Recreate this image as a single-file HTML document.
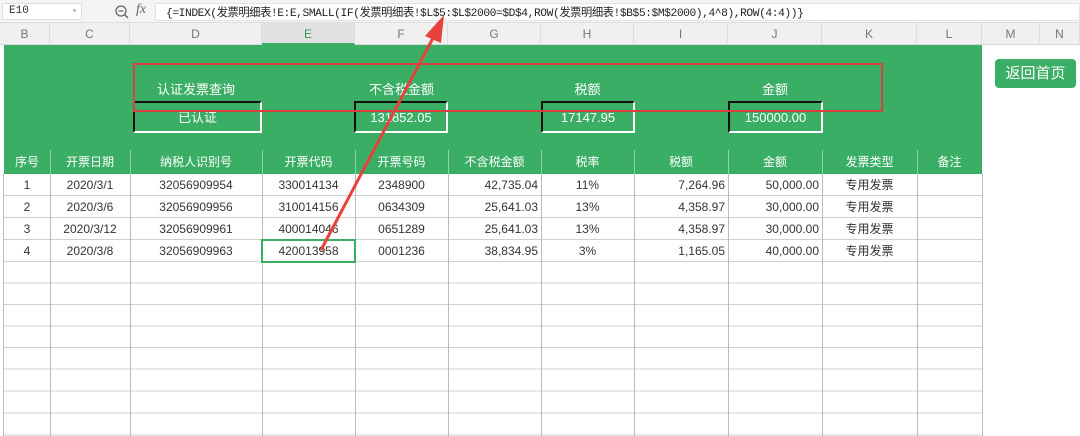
<!DOCTYPE html>
<html><head><meta charset="utf-8"><style>
*{margin:0;padding:0;box-sizing:border-box}
body{width:1080px;height:436px;overflow:hidden;background:#fff;font-family:"Liberation Sans","Noto Sans CJK SC",sans-serif;position:relative}
.a{position:absolute}
.fb{top:0;left:0;width:1080px;height:23px;background:#f4f4f4;border-bottom:1px solid #ddd}
.ch{top:23px;left:0;width:1080px;height:22px;background:#f0f0f0;border-bottom:1px solid #d8d8d8;font-size:12px;color:#777}
.ch div{position:absolute;top:0;height:22px;line-height:22px;text-align:center;border-right:1px solid #ddd}
.green{top:45px;left:4px;width:978px;height:105px;background:#3aae64}
.lbl{color:#fff;font-size:13px;text-align:center;top:79px}
.vb{top:101px;height:32px;border-left:2px solid #111;border-top:2px solid #111;border-right:2px solid #fff;border-bottom:2px solid #fff;color:#fff;font-size:13px;text-align:center;line-height:30px}
.grid{left:0;top:150px}
.c{position:absolute;font-size:12px;color:#333;line-height:22px;white-space:nowrap}
</style></head><body>
<div class="a fb">
 <div class="a" style="left:2px;top:3px;width:80px;height:17px;background:#fff;border:1px solid #e0e0e0;font-size:11px;line-height:15px;padding-left:6px;color:#333;font-family:'Liberation Mono',monospace">E10<span style="position:absolute;right:4px;color:#999;font-size:8px">▾</span></div>
 <svg class="a" style="left:114px;top:4px" width="16" height="16"><circle cx="7" cy="7" r="5" fill="none" stroke="#666" stroke-width="1.3"/><line x1="4.5" y1="7" x2="9.5" y2="7" stroke="#666" stroke-width="1.2"/><line x1="10.5" y1="10.5" x2="14" y2="14" stroke="#666" stroke-width="1.5"/></svg>
 <div class="a" style="left:136px;top:2px;font-family:'Liberation Serif',serif;font-style:italic;font-size:14px;color:#666">fx</div>
 <div class="a" style="left:155px;top:3px;width:925px;height:18px;background:#fff;border:1px solid #e4e4e4"></div>
 <div class="a" style="left:166px;top:4px;font-family:'Liberation Mono','Noto Sans CJK SC',monospace;font-size:11.3px;color:#222;white-space:nowrap;letter-spacing:-0.45px">{=INDEX(发票明细表!E:E,SMALL(IF(发票明细表!$L$5:$L$2000=$D$4,ROW(发票明细表!$B$5:$M$2000),4^8),ROW(4:4))}</div>
</div>
<div class="a ch">
 <div style="left:0;width:50px">B</div><div style="left:50px;width:80px">C</div><div style="left:130px;width:132px">D</div>
 <div style="left:262px;width:93px;background:#e2e2e2;color:#3a9a5c;border-bottom:2px solid #3aae64">E</div><div style="left:355px;width:93px">F</div><div style="left:448px;width:93px">G</div>
 <div style="left:541px;width:93px">H</div><div style="left:634px;width:94px">I</div><div style="left:728px;width:94px">J</div>
 <div style="left:822px;width:95px">K</div><div style="left:917px;width:65px">L</div><div style="left:982px;width:58px">M</div><div style="left:1040px;width:40px">N</div>
</div>
<div class="a green"></div>
<div class="a lbl" style="left:130px;width:132px">认证发票查询</div>
<div class="a lbl" style="left:355px;width:93px">不含税金额</div>
<div class="a lbl" style="left:541px;width:93px">税额</div>
<div class="a lbl" style="left:728px;width:94px">金额</div>
<div class="a vb" style="left:133px;width:129px">已认证</div>
<div class="a vb" style="left:354px;width:94px">131852.05</div>
<div class="a vb" style="left:541px;width:94px">17147.95</div>
<div class="a vb" style="left:728px;width:95px">150000.00</div>
<div class="a" style="left:133px;top:63px;width:750px;height:49px;border:2px solid #d94040"></div>
<div class="a" style="left:995px;top:59px;width:81px;height:29px;background:#3aae64;border-radius:4px;color:#fff;font-size:15px;text-align:center;line-height:29px">返回首页</div>

<svg class="a grid" width="1080" height="286">
 <rect x="4" y="0" width="978" height="24" fill="#3aae64"/>
 <g stroke="#cfcfcf" stroke-width="1">
  <line x1="4" y1="45.5" x2="982" y2="45.5"/><line x1="4" y1="67.5" x2="982" y2="67.5"/><line x1="4" y1="89.5" x2="982" y2="89.5"/><line x1="4" y1="111.5" x2="982" y2="111.5"/>
  <line x1="4" y1="133" x2="982" y2="133"/><line x1="4" y1="154.5" x2="982" y2="154.5"/><line x1="4" y1="176" x2="982" y2="176"/><line x1="4" y1="197.5" x2="982" y2="197.5"/>
  <line x1="4" y1="219" x2="982" y2="219"/><line x1="4" y1="241" x2="982" y2="241"/><line x1="4" y1="263" x2="982" y2="263"/><line x1="4" y1="285" x2="982" y2="285"/>
  <g stroke="#bbb"><line x1="3.5" y1="24" x2="3.5" y2="286"/><line x1="50.5" y1="24" x2="50.5" y2="286"/><line x1="130.5" y1="24" x2="130.5" y2="286"/><line x1="262.5" y1="24" x2="262.5" y2="286"/><line x1="355.5" y1="24" x2="355.5" y2="286"/><line x1="448.5" y1="24" x2="448.5" y2="286"/><line x1="541.5" y1="24" x2="541.5" y2="286"/><line x1="634.5" y1="24" x2="634.5" y2="286"/><line x1="728.5" y1="24" x2="728.5" y2="286"/><line x1="822.5" y1="24" x2="822.5" y2="286"/><line x1="917.5" y1="24" x2="917.5" y2="286"/><line x1="982.5" y1="24" x2="982.5" y2="286"/></g>
 </g>
 <g stroke="#8fd4a8" stroke-width="1"><line x1="50.5" y1="0" x2="50.5" y2="24"/><line x1="130.5" y1="0" x2="130.5" y2="24"/><line x1="262.5" y1="0" x2="262.5" y2="24"/><line x1="355.5" y1="0" x2="355.5" y2="24"/><line x1="448.5" y1="0" x2="448.5" y2="24"/><line x1="541.5" y1="0" x2="541.5" y2="24"/><line x1="634.5" y1="0" x2="634.5" y2="24"/><line x1="728.5" y1="0" x2="728.5" y2="24"/><line x1="822.5" y1="0" x2="822.5" y2="24"/><line x1="917.5" y1="0" x2="917.5" y2="24"/></g>
 <rect x="262" y="90" width="93" height="22" fill="none" stroke="#3aae64" stroke-width="2"/>
</svg>

<div class="a" style="left:0;top:150px;width:1080px;height:24px;color:#fff;font-size:13px">
 <div class="c" style="color:#fff;left:4px;width:46px;text-align:center;line-height:24px">序号</div>
 <div class="c" style="color:#fff;left:50px;width:80px;text-align:center;line-height:24px">开票日期</div>
 <div class="c" style="color:#fff;left:130px;width:132px;text-align:center;line-height:24px">纳税人识别号</div>
 <div class="c" style="color:#fff;left:262px;width:93px;text-align:center;line-height:24px">开票代码</div>
 <div class="c" style="color:#fff;left:355px;width:93px;text-align:center;line-height:24px">开票号码</div>
 <div class="c" style="color:#fff;left:448px;width:93px;text-align:center;line-height:24px">不含税金额</div>
 <div class="c" style="color:#fff;left:541px;width:93px;text-align:center;line-height:24px">税率</div>
 <div class="c" style="color:#fff;left:634px;width:94px;text-align:center;line-height:24px">税额</div>
 <div class="c" style="color:#fff;left:728px;width:94px;text-align:center;line-height:24px">金额</div>
 <div class="c" style="color:#fff;left:822px;width:95px;text-align:center;line-height:24px">发票类型</div>
 <div class="c" style="color:#fff;left:917px;width:65px;text-align:center;line-height:24px">备注</div>
</div>

<div class="a" style="left:0;top:174px">
 <div class="c" style="top:0;left:4px;width:46px;text-align:center">1</div><div class="c" style="top:0;left:50px;width:80px;text-align:center">2020/3/1</div><div class="c" style="top:0;left:130px;width:132px;text-align:center">32056909954</div><div class="c" style="top:0;left:262px;width:93px;text-align:center">330014134</div><div class="c" style="top:0;left:355px;width:93px;text-align:center">2348900</div><div class="c" style="top:0;left:448px;width:90px;text-align:right">42,735.04</div><div class="c" style="top:0;left:541px;width:93px;text-align:center">11%</div><div class="c" style="top:0;left:634px;width:91px;text-align:right">7,264.96</div><div class="c" style="top:0;left:728px;width:91px;text-align:right">50,000.00</div><div class="c" style="top:0;left:822px;width:95px;text-align:center">专用发票</div>
 <div class="c" style="top:22px;left:4px;width:46px;text-align:center">2</div><div class="c" style="top:22px;left:50px;width:80px;text-align:center">2020/3/6</div><div class="c" style="top:22px;left:130px;width:132px;text-align:center">32056909956</div><div class="c" style="top:22px;left:262px;width:93px;text-align:center">310014156</div><div class="c" style="top:22px;left:355px;width:93px;text-align:center">0634309</div><div class="c" style="top:22px;left:448px;width:90px;text-align:right">25,641.03</div><div class="c" style="top:22px;left:541px;width:93px;text-align:center">13%</div><div class="c" style="top:22px;left:634px;width:91px;text-align:right">4,358.97</div><div class="c" style="top:22px;left:728px;width:91px;text-align:right">30,000.00</div><div class="c" style="top:22px;left:822px;width:95px;text-align:center">专用发票</div>
 <div class="c" style="top:44px;left:4px;width:46px;text-align:center">3</div><div class="c" style="top:44px;left:50px;width:80px;text-align:center">2020/3/12</div><div class="c" style="top:44px;left:130px;width:132px;text-align:center">32056909961</div><div class="c" style="top:44px;left:262px;width:93px;text-align:center">400014046</div><div class="c" style="top:44px;left:355px;width:93px;text-align:center">0651289</div><div class="c" style="top:44px;left:448px;width:90px;text-align:right">25,641.03</div><div class="c" style="top:44px;left:541px;width:93px;text-align:center">13%</div><div class="c" style="top:44px;left:634px;width:91px;text-align:right">4,358.97</div><div class="c" style="top:44px;left:728px;width:91px;text-align:right">30,000.00</div><div class="c" style="top:44px;left:822px;width:95px;text-align:center">专用发票</div>
 <div class="c" style="top:66px;left:4px;width:46px;text-align:center">4</div><div class="c" style="top:66px;left:50px;width:80px;text-align:center">2020/3/8</div><div class="c" style="top:66px;left:130px;width:132px;text-align:center">32056909963</div><div class="c" style="top:66px;left:262px;width:93px;text-align:center">420013958</div><div class="c" style="top:66px;left:355px;width:93px;text-align:center">0001236</div><div class="c" style="top:66px;left:448px;width:90px;text-align:right">38,834.95</div><div class="c" style="top:66px;left:541px;width:93px;text-align:center">3%</div><div class="c" style="top:66px;left:634px;width:91px;text-align:right">1,165.05</div><div class="c" style="top:66px;left:728px;width:91px;text-align:right">40,000.00</div><div class="c" style="top:66px;left:822px;width:95px;text-align:center">专用发票</div>
</div>

<svg class="a" style="left:0;top:0" width="1080" height="436">
 <line x1="321" y1="250" x2="433" y2="38" stroke="#e8413c" stroke-width="3"/>
 <polygon points="444,15 425,36 441,43" fill="#e8413c"/>
</svg>
</body></html>
